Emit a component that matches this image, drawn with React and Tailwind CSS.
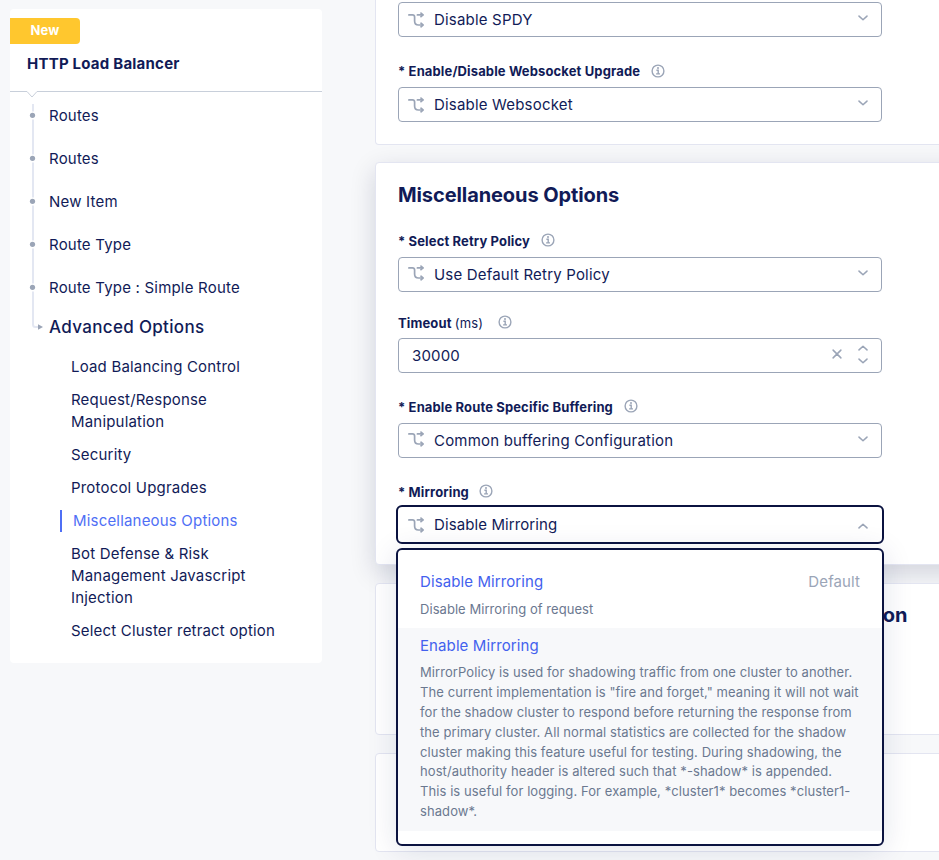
import React from "react";

const steps = ["Routes", "Routes", "New Item", "Route Type", "Route Type : Simple Route"];

const sections = [
  { label: "Load Balancing Control" },
  { label: "Request/Response Manipulation" },
  { label: "Security" },
  { label: "Protocol Upgrades" },
  { label: "Miscellaneous Options", active: true },
  { label: "Bot Defense & Risk Management Javascript Injection" },
  { label: "Select Cluster retract option" },
];

function InfoIcon({ className = "" }) {
  return (
    <svg className={`h-[14px] w-[14px] shrink-0 ${className}`} viewBox="0 0 14 14" fill="none" stroke="#9ba5b7">
      <circle cx="7" cy="7" r="5.9" strokeWidth="1.4" />
      <path d="M5.4 6.2h1.8v3.6M5.1 9.9h3.9" strokeWidth="1.4" />
      <circle cx="7" cy="4" r="1" fill="#9ba5b7" stroke="none" />
    </svg>
  );
}

function BranchIcon({ className = "" }) {
  return (
    <svg
      className={`h-4 w-4 shrink-0 ${className}`}
      viewBox="0 0 16 16"
      fill="none"
      stroke="#9ba5b7"
      strokeWidth="1.7"
      strokeLinecap="round"
      strokeLinejoin="round"
    >
      <path d="M0.9 2.9H4.4C5.9 2.9 6.6 3.6 6.6 5V9C6.6 11.8 8 13 10.4 13H14.6" />
      <path d="M9.4 2.9H14.6" />
      <path d="M13 1.1L15 2.9L13 4.7M13 11.2L15 13L13 14.8" />
    </svg>
  );
}

function Chevron({ up, className = "" }) {
  return (
    <svg
      className={`h-[6px] w-[10px] shrink-0 ${className}`}
      viewBox="0 0 10 6"
      fill="none"
      stroke="#9ba5b7"
      strokeWidth="1.5"
      strokeLinecap="round"
      strokeLinejoin="round"
    >
      <path d={up ? "M1 4.9L5 1.2L9 4.9" : "M1 1.1L5 4.8L9 1.1"} />
    </svg>
  );
}

function Label({ children, gap = "gap-[11px]", iconClass = "mb-[2px]" }) {
  return (
    <div className={`flex h-4 items-center text-[13px] font-bold leading-4 tracking-[0.13px] ${gap}`}>
      <span>{children}</span>
      <InfoIcon className={iconClass} />
    </div>
  );
}

function SelectBox({ value, iconClass = "mb-[3px]" }) {
  return (
    <div className="flex h-[35px] w-[484px] items-center rounded-[4px] border border-[#9ba5b7] pl-[9px] pr-[13px]">
      <BranchIcon className={iconClass} />
      <span className="ml-[10px] flex-1 text-[15px] leading-5 tracking-[0.19px]">{value}</span>
      <Chevron className="mb-[3px]" />
    </div>
  );
}

function Sidebar() {
  return (
    <aside className="mt-[9px] ml-[10px] h-[654px] w-[312px] shrink-0 rounded-[4px] bg-white pt-[9px]">
      <div className="flex h-[26px] w-[70px] items-center justify-center rounded-r-[4px] bg-[#ffc72e] text-[13px] font-bold tracking-[0.1px] text-white">
        New
      </div>
      <h1 className="mt-[9px] pl-[17px] text-[15px] font-bold leading-[22px] tracking-[0.22px]">HTTP Load Balancer</h1>
      <svg className="mt-[16px] block h-[8px] w-[312px]" viewBox="0 0 312 8" fill="none" stroke="#c8cfda">
        <path d="M0 0.5H17L22 6L27 0.5H312" />
      </svg>
      <div className="flex">
        <svg className="mt-[5px] ml-[19px] h-[228px] w-[16px] shrink-0" viewBox="0 0 16 228" fill="none">
          <path d="M4 0V220.5Q4 223 6.5 223H10" stroke="#e3e7f2" strokeWidth="2" />
          {[11.5, 54.5, 97.5, 140.5, 183.5].map((y) => (
            <g key={y}>
              <rect x="1" y={y - 4} width="6" height="8" fill="#fff" />
              <circle cx="3.5" cy={y - 0.2} r="2.6" fill="#9ba5b7" />
            </g>
          ))}
          <path d="M9 220.2L14 223L9 225.8Z" fill="#9ba5b7" />
        </svg>
        <div className="ml-[4px]">
          <ul className="-mt-[4px] text-[15px] tracking-[0.2px]">
            {steps.map((step, i) => (
              <li key={i} className="flex h-[43px] items-center">{step}</li>
            ))}
          </ul>
          <h2 className="mt-[5px] text-[17px] font-medium leading-[24px] tracking-[0.33px]">Advanced Options</h2>
          <ul className="mt-[17px] flex w-[230px] flex-col gap-[11px] text-[15px] leading-[22px] tracking-[0.19px]">
            {sections.map((s) => (
              <li
                key={s.label}
                className={
                  s.active
                    ? "ml-[11px] border-l-2 border-[#4f6ff5] pl-[11px] text-[#4f6ff5]"
                    : "w-[208px] self-end"
                }
              >
                {s.label}
              </li>
            ))}
          </ul>
        </div>
      </div>
    </aside>
  );
}

function MirroringMenu() {
  return (
    <div className="absolute top-[43px] -left-[2px] z-20 h-[298px] w-[488px] rounded-[6px] border-2 border-[#0b1340] bg-white pt-[21px] shadow-[0_4px_30px_rgba(15,30,87,0.12)]">
      <div className="h-[57px] px-[22px]">
        <div className="flex justify-between text-[15px] leading-[22px] tracking-[0.1px]">
          <span className="text-[#4361ee]">Disable Mirroring</span>
          <span className="text-[#9ba5b7]">Default</span>
        </div>
        <p className="mt-[6px] text-[13px] leading-[20px] tracking-[0.05px] text-[#6b7890]">Disable Mirroring of request</p>
      </div>
      <div className="h-[203px] bg-[#f7f8fa] px-[22px] pt-[7px]">
        <div className="text-[15px] leading-[22px] tracking-[0.1px] text-[#4361ee]">Enable Mirroring</div>
        <p className="mt-[6.4px] text-[13px] leading-[19.8px] tracking-[0.08px] text-[#6b7890]">
          MirrorPolicy is used for shadowing traffic from one cluster to another.
          <br />
          The current implementation is "fire and forget," meaning it will not wait
          <br />
          for the shadow cluster to respond before returning the response from
          <br />
          the primary cluster. All normal statistics are collected for the shadow
          <br />
          cluster making this feature useful for testing. During shadowing, the
          <br />
          host/authority header is altered such that *-shadow* is appended.
          <br />
          This is useful for logging. For example, *cluster1* becomes *cluster1-
          <br />
          shadow*.
        </p>
      </div>
    </div>
  );
}

export default function App() {
  return (
    <div className="flex h-[860px] w-full overflow-hidden bg-[#f7f8fa] font-[Inter,sans-serif] text-[#111b57]">
      <Sidebar />
      <main className="ml-[53px] flex w-[600px] shrink-0 flex-col">
        <section className="h-[145px] shrink-0 rounded-b-[4px] border border-t-0 border-[#e3e5f1] bg-white pl-[22px] pt-[2px]">
          <SelectBox value="Disable SPDY" iconClass="" />
          <div className="mt-[26px] mb-[8px]">
            <Label iconClass="">* Enable/Disable Websocket Upgrade</Label>
          </div>
          <SelectBox value="Disable Websocket" iconClass="" />
        </section>

        <section className="relative mt-[17px] h-[403px] shrink-0 rounded-[4px] border border-[#e3e5f1] bg-white pl-[22px] pt-[18px] shadow-[0_8px_26px_rgba(15,20,60,0.16)]">
          <h2 className="text-[20px] font-bold leading-[28px] tracking-[-0.09px]">Miscellaneous Options</h2>
          <div className="mt-[24px] mb-[8px]">
            <Label>* Select Retry Policy</Label>
          </div>
          <SelectBox value="Use Default Retry Policy" />
          <div className="mt-[23px] mb-[7px]">
            <Label gap="gap-[15px]">
              Timeout <span className="font-normal">(ms)</span>
            </Label>
          </div>
          <div className="flex h-[35px] w-[484px] items-center rounded-[4px] border border-[#9ba5b7] pl-[13px] pr-[13px]">
            <span className="flex-1 text-[15px] leading-5 tracking-[0.15px]">30000</span>
            <svg className="mb-[3px] h-[10px] w-[10px]" viewBox="0 0 10 10" stroke="#9ba5b7" strokeWidth="1.5" strokeLinecap="round">
              <path d="M1.1 1.1L8.9 8.9M8.9 1.1L1.1 8.9" />
            </svg>
            <span className="mb-[2px] ml-[16px] flex flex-col gap-[7px]">
              <Chevron up />
              <Chevron />
            </span>
          </div>
          <div className="mt-[26px] mb-[8px]">
            <Label>* Enable Route Specific Buffering</Label>
          </div>
          <SelectBox value="Common buffering Configuration" />
          <div className="mt-[26px] mb-[5px]">
            <Label gap="gap-[10px]">* Mirroring</Label>
          </div>
          <div className="relative w-[484px]">
            <div className="-ml-[2px] flex h-[39px] w-[488px] items-center rounded-[6px] border-2 border-[#0b1340] pl-[10px] pr-[14px]">
              <BranchIcon />
              <span className="ml-[10px] flex-1 text-[15px] leading-5 tracking-[0.1px]">Disable Mirroring</span>
              <Chevron up className="mt-[2px]" />
            </div>
            <MirroringMenu />
          </div>
        </section>

        <section className="relative mt-[18px] h-[152px] shrink-0 rounded-[4px] border border-[#e3e5f1] bg-white pl-[22px] pt-[17px]">
          <h2 className="text-[20px] font-bold leading-[28px] tracking-[-0.09px]">Bot Defense &amp; Risk Management Javascript Injection</h2>
        </section>
        <section className="relative mt-[18px] h-[99px] shrink-0 rounded-[4px] border border-[#e3e5f1] bg-white" />
      </main>
    </div>
  );
}
